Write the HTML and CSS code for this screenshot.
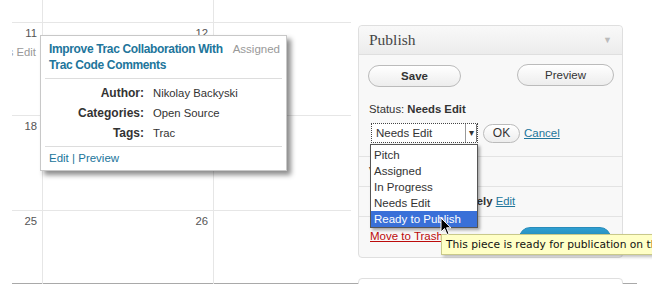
FILE: index.html
```html
<!DOCTYPE html>
<html lang="en">
<head>
  <meta charset="UTF-8">
  <meta name="viewport" content="width=device-width, initial-scale=1.0">
  <title>Calendar - Publish</title>
  <link rel="stylesheet" href="styles.css">
</head>
<body>
  <div class="page">
    <div class="calendar">
      <div class="cell"></div>
      <div class="cell"></div>
      <div class="cell last"></div>

      <div class="cell">
        <div class="day">11</div>
        <div class="event">Needs Edit</div>
      </div>
      <div class="cell"><div class="day">12</div></div>
      <div class="cell last"></div>

      <div class="cell"><div class="day">18</div></div>
      <div class="cell"></div>
      <div class="cell last"></div>

      <div class="cell"><div class="day">25</div></div>
      <div class="cell"><div class="day">26</div></div>
      <div class="cell last"></div>
    </div>

    <!-- post popup over the calendar -->
    <div class="post-popup">
      <div class="popup-head">
        <a href="#" class="popup-title">Improve Trac Collaboration With Trac Code Comments</a>
        <span class="popup-status">Assigned</span>
      </div>
      <div class="popup-meta">
        <div class="meta-label">Author:</div><div class="meta-value">Nikolay Backyski</div>
        <div class="meta-label">Categories:</div><div class="meta-value">Open Source</div>
        <div class="meta-label">Tags:</div><div class="meta-value">Trac</div>
      </div>
      <div class="popup-actions"><a href="#">Edit</a> | <a href="#">Preview</a></div>
    </div>

    <div class="sidebar">
      <div class="postbox">
        <div class="postbox-head">
          <h3>Publish</h3>
          <span class="toggle">&#9660;</span>
        </div>
        <div class="pub-buttons">
          <button class="btn save">Save</button>
          <button class="btn preview">Preview</button>
        </div>
        <div class="misc-section status">
          <div>Status: <b>Needs Edit</b></div>
          <div class="status-edit">
            <div class="select-wrap">
              <div class="select">
                <span class="select-text">Needs Edit</span>
                <span class="select-arrow">&#9662;</span>
              </div>
              <ul class="dropdown">
                <li>Pitch</li>
                <li>Assigned</li>
                <li>In Progress</li>
                <li>Needs Edit</li>
                <li class="active">Ready to Publish</li>
              </ul>
              <svg class="cursor" width="12" height="19" viewBox="0 0 12 19">
                <path d="M1 1 L1 15 L4.5 11.5 L7 17.5 L9 16.6 L6.6 10.8 L11 10.8 Z" fill="#000" stroke="#fff" stroke-width="1"/>
              </svg>
            </div>
            <button class="btn ok">OK</button>
            <a href="#" class="cancel">Cancel</a>
          </div>
        </div>
        <div class="misc-section">Visibility: Public</div>
        <div class="misc-section schedule">Publish <b>immediately</b> <a href="#">Edit</a></div>
        <div class="major">
          <a href="#" class="trash">Move to Trash</a>
          <button class="btn publish">Publish</button>
          <div class="tooltip">This piece is ready for publication on the site.</div>
        </div>
      </div>
      <div class="postbox next"></div>
    </div>
  </div>
</body>
</html>
```

FILE: styles.css
```css
body {
  margin: 0;
  background: #fff;
  font-family: "Liberation Sans", Arial, sans-serif;
  font-size: 11.3px;
  color: #333;
  overflow: hidden;
}
a {
  color: #21759b;
  text-decoration: none;
}
.page {
  position: relative;
  margin-left: 12px;
  width: 625px;
  height: 283px;
  border-bottom: 1px solid #a9a9a9;
  display: flex;
  align-items: flex-start;
}

/* calendar */
.calendar {
  width: 339px;
  flex-shrink: 0;
  display: grid;
  grid-template-columns: 31px 171px 137px;
  grid-template-rows: 23px 93px 95px 73px;
}
.cell {
  border-right: 1px solid #e6e6e6;
  border-bottom: 1px solid #e6e6e6;
  box-sizing: border-box;
  overflow: hidden;
}
.cell.last {
  border-right: none;
}
.calendar .cell:nth-child(n+10) {
  border-bottom: none;
}
.day {
  text-align: right;
  padding: 3px 5px 0 0;
  color: #555;
  line-height: 14px;
}
.event {
  direction: rtl;
  text-align: right;
  padding: 5px 6px 0 0;
  color: #999;
  white-space: nowrap;
  line-height: 14px;
}

/* popup */
.post-popup {
  position: absolute;
  left: 28px;
  top: 35px;
  width: 237px;
  height: 134px;
  background: #fff;
  border: 1px solid #c8c8c8;
  box-shadow: 4px 4px 5px rgba(0, 0, 0, 0.45);
  padding: 0 4px;
}
.popup-head {
  display: flex;
  justify-content: space-between;
  padding: 5px 2px 0 4px;
  height: 37px;
  border-bottom: 1px solid #ddd;
}
.popup-title {
  width: 178px;
  font-weight: bold;
  font-size: 12px;
  letter-spacing: -0.35px;
  line-height: 16px;
}
.popup-status {
  color: #999;
  font-size: 11.5px;
  line-height: 16px;
}
.popup-meta {
  display: grid;
  grid-template-columns: 99px 1fr;
  column-gap: 9px;
  row-gap: 6px;
  padding: 7px 0 6px;
  border-bottom: 1px solid #ddd;
  line-height: 14px;
}
.meta-label {
  text-align: right;
  font-weight: bold;
  font-size: 12px;
}
.popup-actions {
  padding: 4px 4px;
  color: #21759b;
  line-height: 14px;
  font-size: 11.5px;
}

/* sidebar */
.sidebar {
  margin-left: 7px;
  margin-top: 25px;
  width: 265px;
}
.postbox {
  position: relative;
  border: 1px solid #dfdfdf;
  border-radius: 4px;
  background: #f8f8f8;
  height: 231px;
}
.postbox-head {
  height: 28px;
  border-bottom: 1px solid #dfdfdf;
  background: linear-gradient(#f9f9f9, #ececec);
  border-radius: 4px 4px 0 0;
  display: flex;
  justify-content: space-between;
  align-items: center;
  padding: 0 10px;
}
.postbox-head h3 {
  margin: 0;
  font-family: "Liberation Serif", Georgia, serif;
  font-weight: normal;
  font-size: 15.5px;
  color: #464646;
}
.toggle {
  font-size: 9px;
  color: #bbb;
}
.pub-buttons {
  display: flex;
  justify-content: space-between;
  padding: 9px 8px 0 9px;
}
.btn {
  font-family: "Liberation Sans", Arial, sans-serif;
  font-size: 11.5px;
  color: #333;
  border: 1px solid #bbb;
  border-radius: 11px;
  background: linear-gradient(#fff, #ededed);
  height: 22px;
  padding: 0;
}
.save {
  width: 93px;
  font-weight: bold;
  margin-top: 1px;
}
.preview {
  width: 97px;
}
.misc-section {
  border-bottom: 1px solid #e3e3e3;
  padding: 0 10px;
  height: 29px;
  line-height: 29px;
}
.misc-section.status {
  height: auto;
  line-height: 16px;
  padding: 14px 10px 13px;
}
.status-edit {
  display: flex;
  align-items: center;
  margin-top: 6px;
}
.select-wrap {
  position: relative;
  margin-left: 2px;
}
.select {
  width: 105px;
  height: 18px;
  border: 1px dotted #444;
  background: #fff;
  display: flex;
  justify-content: space-between;
  font-size: 11.5px;
}
.select-text {
  padding-left: 4px;
  line-height: 18px;
}
.select-arrow {
  width: 10px;
  border-left: 1px solid #999;
  border-right: 1px solid #777;
  font-size: 10px;
  line-height: 18px;
  text-align: center;
}
.dropdown {
  position: absolute;
  left: -1px;
  top: 21px;
  width: 106px;
  margin: 0;
  padding: 2px 0 0;
  list-style: none;
  background: #fff;
  border: 1px solid #555;
  box-shadow: 2px 2px 3px rgba(0, 0, 0, 0.35);
  font-size: 11.5px;
  z-index: 2;
}
.dropdown li {
  height: 16px;
  line-height: 16px;
  padding-left: 3px;
}
.dropdown li.active {
  background: #3a70d8;
  color: #fff;
}
.cursor {
  position: absolute;
  left: 69px;
  top: 94px;
  z-index: 4;
}
.ok {
  width: 37px;
  height: 19px;
  font-size: 12px;
  margin-left: 5px;
  border-radius: 10px;
}
.cancel {
  margin-left: 4px;
  font-size: 11.5px;
  text-decoration: underline;
}
.schedule {
  padding-left: 28px;
}
.schedule a {
  text-decoration: underline;
}
.major {
  position: relative;
  height: 40px;
  display: flex;
  justify-content: space-between;
  padding: 0 11px 0 11px;
}
.trash {
  color: #bc0b0b;
  text-decoration: underline;
  font-size: 11.5px;
  margin-top: 13px;
  height: 16px;
}
.publish {
  margin-top: 10px;
  width: 92px;
  height: 24px;
  border-color: #298cba;
  background: linear-gradient(#2e9fd2, #21759b);
  color: #fff;
  font-weight: bold;
  font-size: 13px;
}
.tooltip {
  position: absolute;
  left: 82px;
  top: 17px;
  height: 19px;
  line-height: 19px;
  padding: 0 4px;
  white-space: nowrap;
  background: #ffffc6;
  border: 1px solid #c9c98a;
  box-shadow: 2px 2px 3px rgba(0, 0, 0, 0.25);
  font-family: "DejaVu Sans", sans-serif;
  font-size: 10.7px;
  color: #111;
  z-index: 3;
}
.postbox.next {
  height: 8px;
  margin-top: 20px;
  background: #fff;
}
```
